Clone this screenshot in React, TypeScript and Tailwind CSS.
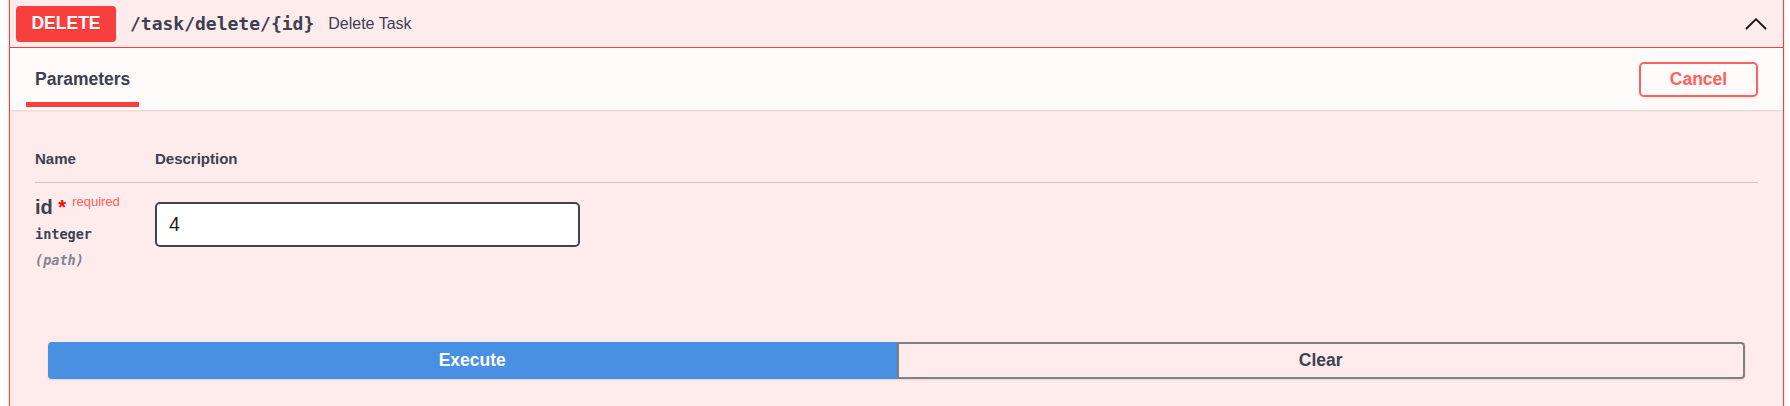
import React from "react";

export default function App() {
  return (
    <div className="h-[406px] overflow-hidden bg-white pl-[9px] pr-[6px] font-['Liberation_Sans',Arial,sans-serif] text-[#3b4151]">
      <div className="h-[440px] border border-t-0 border-[#f93e3e] bg-[#feecec] shadow-[0_0_3px_rgba(0,0,0,0.19)]">
        {/* Summary */}
        <div className="flex h-[48px] items-center border-b border-[#f93e3e] pl-[6px] pr-[16px]">
          <span className="flex h-[36px] w-[100px] items-center justify-center rounded-[4px] bg-[#f93e3e] text-[17.5px] font-bold text-white [text-shadow:0_1px_0_rgba(0,0,0,0.1)]">
            DELETE
          </span>
          <span className="ml-[14px] font-['DejaVu_Sans_Mono',monospace] text-[18px] font-semibold text-[#3b4151]">
            /task/delete/{"{id}"}
          </span>
          <span className="ml-[14px] text-[16px] text-[#3b4151]">Delete Task</span>
          <svg className="ml-auto" width="22" height="12" viewBox="0 0 22 12" fill="none">
            <polyline points="1,11 11,1.2 21,11" stroke="#111" strokeWidth="1.8" strokeLinejoin="miter" />
          </svg>
        </div>

        {/* Tab header */}
        <div className="flex h-[62px] items-center justify-between bg-[rgba(255,255,255,0.8)] pl-[16px] pr-[25px] shadow-[0_1px_2px_rgba(0,0,0,0.1)]">
          <div className="relative flex h-full items-center px-[9px]">
            <span className="text-[17.5px] font-bold text-[#3b4151]">Parameters</span>
            <span className="absolute bottom-[3px] left-0 right-0 h-[5px] bg-[#f93e3e]" />
          </div>
          <button className="flex h-[35px] w-[119px] items-center justify-center rounded-[5px] border-2 border-[#ff6060] bg-transparent text-[17.5px] font-bold text-[#ff6060] shadow-[0_1px_2px_rgba(0,0,0,0.1)]">
            Cancel
          </button>
        </div>

        {/* Parameters table */}
        <div className="px-[25px] pt-[40px]">
          <div className="flex border-b border-[rgba(59,65,81,0.25)] pb-[15px] text-[15px] font-bold leading-[17px] text-[#3b4151]">
            <div className="w-[120px]">Name</div>
            <div>Description</div>
          </div>
          <div className="flex">
            <div className="w-[120px] pt-[13px]">
              <div className="flex items-baseline text-[20px] font-bold leading-[23px] text-[#3b4151]">
                <span>id</span>
                <span className="text-[#ff0000]">&nbsp;*</span>
                <span className="relative top-[-8px] pl-[6px] text-[13px] font-normal text-[#ff5e5e]">required</span>
              </div>
              <div className="mt-[5px] font-['DejaVu_Sans_Mono',monospace] text-[13.5px] font-semibold leading-[16px] text-[#3b4151]">
                integer
              </div>
              <div className="mt-[10px] font-['DejaVu_Sans_Mono',monospace] text-[13.5px] font-semibold italic leading-[16px] text-[#7f8592]">
                (path)
              </div>
            </div>
            <div className="pt-[19px]">
              <div className="flex h-[45px] w-[425px] items-center rounded-[5px] border-2 border-[#41444e] bg-white pl-[12px] text-[19.5px] text-[#1e1e24]">
                4
              </div>
            </div>
          </div>
        </div>

        {/* Execute */}
        <div className="flex px-[38px] pt-[74px]">
          <button className="flex h-[37px] flex-1 items-center justify-center rounded-l-[4px] border-2 border-[#4990e2] bg-[#4990e2] text-[17.5px] font-bold text-white shadow-[0_1px_2px_rgba(0,0,0,0.1)]">
            Execute
          </button>
          <button className="flex h-[37px] flex-1 items-center justify-center rounded-r-[4px] border-2 border-[#808080] bg-transparent text-[17.5px] font-bold text-[#3b4151] shadow-[0_1px_2px_rgba(0,0,0,0.1)]">
            Clear
          </button>
        </div>
      </div>
    </div>
  );
}
